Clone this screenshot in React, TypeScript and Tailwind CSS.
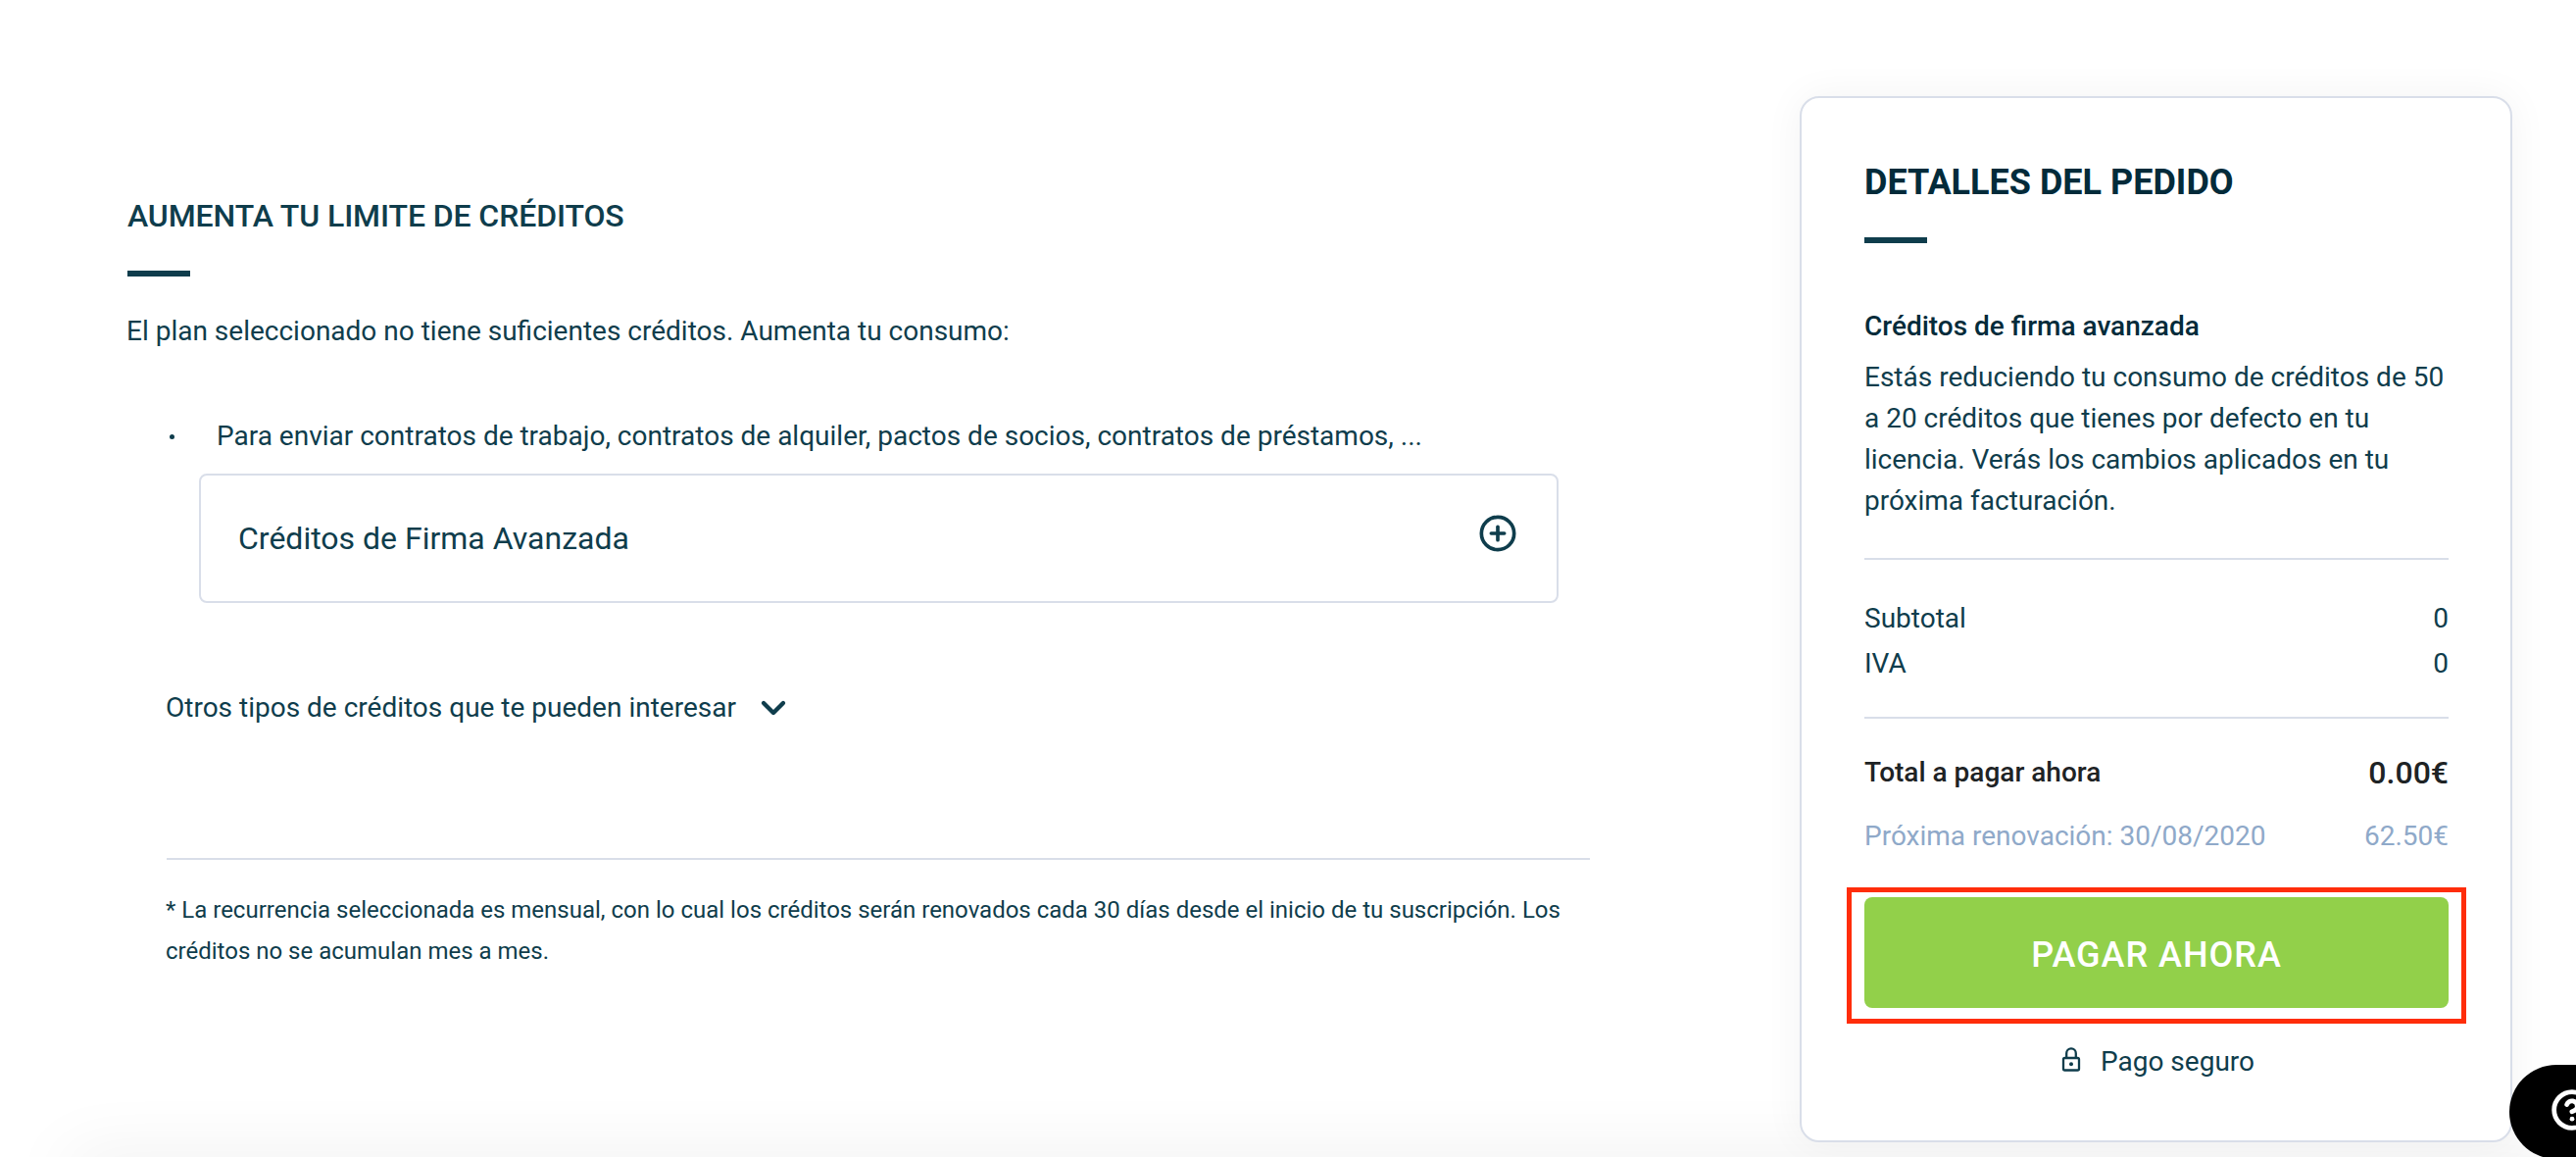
import { ChevronDown, CirclePlus, CircleHelp } from "lucide-react";

const LockIcon = () => (
  <svg width="20" height="26" viewBox="0 0 20 26" fill="none" stroke="#0f3d4c" strokeWidth="2.3" className="-mt-1">
    <rect x="2" y="11" width="16" height="12.5" rx="1.5" />
    <path d="M5.2 11V6.2a4.8 4.8 0 0 1 9.6 0V11" />
    <circle cx="10" cy="17.2" r="2" fill="#0f3d4c" stroke="none" />
  </svg>
);

const Bar = () => <div className="w-16 h-1.5 bg-[#0f3d4c]" />;

export default function App() {
  return (
    <div className="relative flex justify-between w-[2628px] h-[1180px] overflow-hidden bg-white font-['Roboto',sans-serif] text-[#0f3d4c]">
      {/* Soft shadow of the panel that sits below the fold */}
      <div className="absolute left-[70px] right-0 top-[1180px] h-10 shadow-[0_0_70px_rgba(0,0,0,0.08)]" />

      {/* Left column */}
      <div className="relative ml-[130px] pt-[200px] w-[1500px]">
        <h2 className="text-[32px] leading-[40px] font-medium tracking-[-0.1px]">AUMENTA TU LIMITE DE CRÉDITOS</h2>
        <div className="mt-9">
          <Bar />
        </div>
        <p className="mt-[35px] -ml-[1px] text-[28px] leading-[42px]">
          El plan seleccionado no tiene suficientes créditos. Aumenta tu consumo:
        </p>

        <div className="mt-[65px] flex items-center text-[28px] leading-[42px]">
          <span className="ml-[43px] w-[5px] h-[5px] rounded-full bg-[#0f3d4c]" />
          <span className="ml-[43px]">
            Para enviar contratos de trabajo, contratos de alquiler, pactos de socios, contratos de préstamos, ...
          </span>
        </div>

        <div className="mt-[17px] ml-[73px] w-[1387px] h-[132px] border-2 border-[#d9dee9] rounded-lg flex items-center justify-between pl-[38px] pr-[40px]">
          <span className="text-[32px] leading-[42px]">Créditos de Firma Avanzada</span>
          <CirclePlus className="w-10 h-10 -mt-[10px]" strokeWidth={2.2} />
        </div>

        <div className="mt-[86px] ml-[39px] flex items-center text-[28px] leading-[42px]">
          <span>Otros tipos de créditos que te pueden interesar</span>
          <ChevronDown className="ml-[18px] w-10 h-10" strokeWidth={2.6} />
        </div>

        <div className="mt-[132px] ml-[40px] w-[1452px] h-0.5 bg-[#d9dee9]" />
        <p className="mt-[30px] ml-[39px] w-[1453px] text-[24px] leading-[42px]">
          * La recurrencia seleccionada es mensual, con lo cual los créditos serán renovados cada 30 días desde el inicio de tu suscripción. Los créditos no se acumulan mes a mes.
        </p>
      </div>

      {/* Order card */}
      <div className="relative mt-[98px] mr-[65px] w-[727px] h-[1067px] bg-white border-2 border-[#d9dee9] rounded-[20px] shadow-[0_0_40px_rgba(0,0,0,0.05)] pt-[66px] pl-[64px] pr-[63px]">
        <h2 className="text-[36px] leading-[40px] font-bold text-[#032b3a]">DETALLES DEL PEDIDO</h2>
        <div className="mt-[36px]">
          <Bar />
        </div>
        <h3 className="mt-[65px] text-[28px] leading-[40px] font-medium text-[#032b3a]">Créditos de firma avanzada</h3>
        <p className="mt-[11px] text-[28px] leading-[42px]">
          Estás reduciendo tu consumo de créditos de 50 a 20 créditos que tienes por defecto en tu licencia. Verás los cambios aplicados en tu próxima facturación.
        </p>
        <div className="mt-[37px] h-0.5 bg-[#d9dee9]" />

        <div className="mt-[39px] flex justify-between text-[28px] leading-[42px]">
          <span>Subtotal</span>
          <span>0</span>
        </div>
        <div className="mt-[4px] flex justify-between text-[28px] leading-[42px]">
          <span>IVA</span>
          <span>0</span>
        </div>
        <div className="mt-[33px] h-0.5 bg-[#d9dee9]" />

        <div className="mt-[34px] flex justify-between items-center leading-[42px] text-[#1e2325]">
          <span className="text-[28px] font-medium">Total a pagar ahora</span>
          <span className="text-[32px] font-medium">0.00€</span>
        </div>
        <div className="mt-[23px] flex justify-between text-[28px] leading-[42px] text-[#8fa9c9]">
          <span>Próxima renovación: 30/08/2020</span>
          <span>62.50€</span>
        </div>

        {/* Highlighted button */}
        <div className="mt-[31px] -mx-[18px] border-[5px] border-[#ff2d0a] pt-[5px] pb-[11px] px-[13px]">
          <button className="w-full h-[113px] rounded-lg bg-[#92d04a] text-white text-[36px] font-medium tracking-[1px] pt-[4px]">
            PAGAR AHORA
          </button>
        </div>

        <div className="mt-[18px] ml-[3px] flex items-center justify-center gap-[20px] text-[28px] leading-[42px]">
          <LockIcon />
          <span>Pago seguro</span>
        </div>
      </div>

      {/* Help bubble */}
      <div className="absolute left-[2560px] top-[1086px] w-[120px] h-[96px] rounded-[48px] bg-black flex items-center pl-[42px]">
        <CircleHelp className="text-white w-[44px] h-[44px] shrink-0 -mt-[4px]" strokeWidth={2.6} />
      </div>
    </div>
  );
}
